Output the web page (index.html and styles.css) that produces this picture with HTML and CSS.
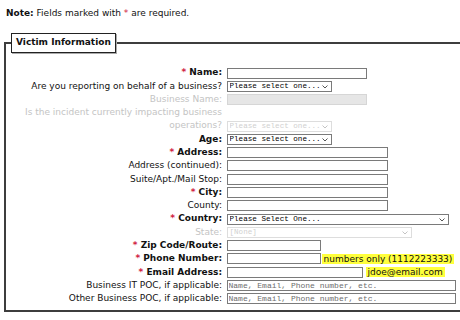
FILE: index.html
```html
<!DOCTYPE html>
<html>
<head>
    <title>Report Form</title>
    <link rel="stylesheet" href="styles.css">
</head>
<body>
    <p class="note"><strong>Note:</strong> Fields marked with <span class="req">*</span> are required.</p>

    <fieldset class="victim">
        <legend>Victim Information</legend>
        <div class="form-grid">
            <label class="lbl b"><span class="req">*</span> Name:</label>
            <div class="ctl"><input type="text" class="w-name"></div>

            <label class="lbl">Are you reporting on behalf of a business?</label>
            <div class="ctl"><span class="sel"><select class="w-small"><option>Please select one...</option></select><svg class="chev" width="6" height="4"><polyline points="0.5,0.5 3,3 5.5,0.5"/></svg></span></div>

            <label class="lbl off">Business Name:</label>
            <div class="ctl"><input type="text" class="w-name" disabled></div>

            <label class="lbl off">Is the incident currently impacting business operations?</label>
            <div class="ctl"><span class="sel off"><select class="w-small" disabled><option>Please select one...</option></select><svg class="chev" width="6" height="4"><polyline points="0.5,0.5 3,3 5.5,0.5"/></svg></span></div>

            <label class="lbl b">Age:</label>
            <div class="ctl"><span class="sel"><select class="w-small"><option>Please select one...</option></select><svg class="chev" width="6" height="4"><polyline points="0.5,0.5 3,3 5.5,0.5"/></svg></span></div>

            <label class="lbl b"><span class="req">*</span> Address:</label>
            <div class="ctl"><input type="text" class="w-addr"></div>

            <label class="lbl">Address (continued):</label>
            <div class="ctl"><input type="text" class="w-addr"></div>

            <label class="lbl">Suite/Apt./Mail Stop:</label>
            <div class="ctl"><input type="text" class="w-addr"></div>

            <label class="lbl b"><span class="req">*</span> City:</label>
            <div class="ctl"><input type="text" class="w-addr"></div>

            <label class="lbl">County:</label>
            <div class="ctl"><input type="text" class="w-addr"></div>

            <label class="lbl b"><span class="req">*</span> Country:</label>
            <div class="ctl"><span class="sel"><select class="w-country"><option>Please Select One...</option></select><svg class="chev" width="6" height="4"><polyline points="0.5,0.5 3,3 5.5,0.5"/></svg></span></div>

            <label class="lbl off">State:</label>
            <div class="ctl"><span class="sel off"><select class="w-state" disabled><option>[None]</option></select><svg class="chev" width="6" height="4"><polyline points="0.5,0.5 3,3 5.5,0.5"/></svg></span></div>

            <label class="lbl b"><span class="req">*</span> Zip Code/Route:</label>
            <div class="ctl"><input type="text" class="w-zip"></div>

            <label class="lbl b"><span class="req">*</span> Phone Number:</label>
            <div class="ctl"><input type="text" class="w-zip"><span class="hint">numbers only (1112223333)</span></div>

            <label class="lbl b"><span class="req">*</span> Email Address:</label>
            <div class="ctl"><input type="text" class="w-email"><span class="hint hint-email">jdoe@email.com</span></div>

            <label class="lbl">Business IT POC, if applicable:</label>
            <div class="ctl"><input type="text" class="w-poc" placeholder="Name, Email, Phone number, etc."></div>

            <label class="lbl">Other Business POC, if applicable:</label>
            <div class="ctl"><input type="text" class="w-poc" placeholder="Name, Email, Phone number, etc."></div>
        </div>
    </fieldset>
</body>
</html>
```

FILE: styles.css
```css
body {
    margin: 0;
    font-family: "DejaVu Sans", Verdana, sans-serif;
    font-size: 9px;
    color: #111;
    background-color: #fff;
}
.note {
    margin: 0;
    padding: 7px 6px 0;
    line-height: 13.28px;
}
.req {
    color: #d0213f;
}
/* right edge of the box is cut off in the original, so no right border */
.victim {
    margin: 13px 0 0 4px;
    min-width: 0;
    border: 2px solid #3d3d3d;
    border-right: none;
    padding: 13.8px 0 4.6px 0;
}
.victim legend {
    margin-left: 5px;
    padding: 2px 4px;
    border: 1px solid #222;
    font-weight: bold;
    font-size: 9px;
    line-height: 13.28px;
    box-shadow: 1px 1px 0 #aaa;
}
.form-grid {
    display: grid;
    grid-template-columns: 216px 1fr;
    column-gap: 4.5px;
    align-items: end;
}
.lbl {
    text-align: right;
    line-height: 13.28px;
}
.lbl.b { font-weight: bold; }
.lbl.off { color: #c4c4c4; }
.ctl {
    height: 13.28px;
    display: flex;
    align-items: center;
    min-width: 0;
}
input[type="text"] {
    box-sizing: border-box;
    height: 11px;
    margin: 0;
    padding: 0 1px;
    border: 1px solid #7a7a7a;
    border-radius: 0;
    background-color: #fff;
    font-family: "Liberation Mono", "Courier New", monospace;
    font-size: 8px;
    color: #111;
    flex: none;
}
input[type="text"]::placeholder {
    color: #6d6d6d;
}
input[type="text"]:disabled {
    background-color: #e6e6e6;
    border-color: #d6d6d6;
}
.sel {
    position: relative;
    display: inline-block;
    height: 11px;
}
select {
    -webkit-appearance: none;
    appearance: none;
    box-sizing: border-box;
    height: 11px;
    margin: 0;
    padding: 0 0 0 2px;
    border: 1px solid #7a7a7a;
    border-radius: 0;
    background-color: #fff;
    font-family: "Liberation Mono", "Courier New", monospace;
    font-size: 7.6px;
    line-height: 9px;
    color: #000;
    display: block;
}
.sel.off select {
    border-color: #cfcfcf;
    color: #bdbdbd;
}
.chev {
    position: absolute;
    right: 4px;
    top: 4px;
    fill: none;
    stroke: #555;
    stroke-width: 1;
}
.sel.off .chev { stroke: #c4c4c4; }
.w-name { width: 140px; }
.w-small { width: 105px; }
.w-addr { width: 161px; }
.w-country { width: 222px; }
.w-state { width: 185px; }
.w-zip { width: 94px; }
.w-email { width: 136px; }
.w-poc { width: 229px; }
.hint {
    margin-left: 1px;
    padding: 0 2px;
    line-height: 10px;
    white-space: nowrap;
    background-color: #ffff3c;
    color: #111;
}
.hint-email {
    margin-left: 3px;
}
```
